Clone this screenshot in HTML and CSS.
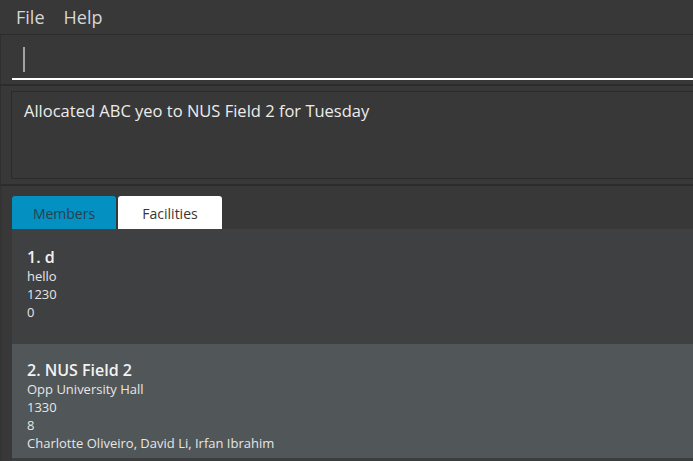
FILE: index.html
```html
<!DOCTYPE html>
<html>
<head>
<meta charset="utf-8">
<link rel="stylesheet" href="styles.css">
</head>
<body>
<div class="app">
  <div class="menubar">
    <span class="menu-item">File</span>
    <span class="menu-item">Help</span>
  </div>
  <div class="command-pane">
    <div class="command-field"><span class="caret"></span></div>
  </div>
  <div class="result-pane">
    <div class="result-box">Allocated ABC yeo to NUS Field 2 for Tuesday</div>
  </div>
  <div class="list-pane">
    <div class="tabs">
      <div class="tab tab-active">Members</div>
      <div class="tab tab-white">Facilities</div>
    </div>
    <div class="list">
      <div class="card card-odd">
        <div class="card-title">1. d</div>
        <div class="card-line">hello</div>
        <div class="card-line">1230</div>
        <div class="card-line">0</div>
      </div>
      <div class="card card-even">
        <div class="card-title">2. NUS Field 2</div>
        <div class="card-line">Opp University Hall</div>
        <div class="card-line">1330</div>
        <div class="card-line">8</div>
        <div class="card-line">Charlotte Oliveiro, David Li, Irfan Ibrahim</div>
      </div>
    </div>
  </div>
</div>
</body>
</html>
```

FILE: styles.css
```css
html, body {
  margin: 0;
  padding: 0;
  background: #383838;
  font-family: "Open Sans", "Noto Sans", sans-serif;
  overflow: hidden;
}
.app {
  width: 693px;
  height: 461px;
  display: flex;
  flex-direction: column;
  background: #383838;
}
.menubar {
  height: 34px;
  flex: none;
  border-bottom: 1px solid #2c2c2c;
  display: flex;
  align-items: center;
  gap: 19px;
  padding-left: 16px;
}
.menu-item {
  color: #d6d6d6;
  font-size: 18px;
  line-height: 22px;
}
.command-pane {
  height: 51px;
  flex: none;
  border-left: 1px solid #2f2f2f;
  border-bottom: 2px solid #2c2c2c;
  padding: 12px 0 0 11px;
  box-sizing: border-box;
}
.command-field {
  height: 31px;
  border-bottom: 2px solid #ffffff;
  padding-left: 11px;
}
.caret {
  display: block;
  width: 2px;
  height: 25px;
  background: #a3a3a3;
}
.result-pane {
  height: 100px;
  flex: none;
  border-left: 1px solid #2f2f2f;
  border-bottom: 2px solid #2c2c2c;
  padding: 5px 0 0 10px;
  box-sizing: border-box;
}
.result-box {
  height: 88px;
  border: 1px solid #2b2b2b;
  border-right: none;
  box-sizing: border-box;
  padding: 8px 12px;
  color: #ececec;
  font-size: 16.5px;
  line-height: 22px;
}
.list-pane {
  flex: 1;
  border-left: 2px solid #333333;
  padding: 10px 0 0 10px;
  display: flex;
  flex-direction: column;
}
.tabs {
  display: flex;
  gap: 2px;
  height: 33px;
  flex: none;
}
.tab {
  width: 104px;
  height: 33px;
  border-radius: 3px 3px 0 0;
  display: flex;
  align-items: center;
  justify-content: center;
  font-size: 14px;
  padding-top: 1px;
  box-sizing: border-box;
}
.tab-active {
  background: #0491c1;
  color: #27404e;
}
.tab-white {
  background: #ffffff;
  color: #3a3530;
}
.list {
  flex: 1;
  display: flex;
  flex-direction: column;
  background: #3c3d3f;
}
.card {
  box-sizing: border-box;
  padding: 0 15px;
  flex: none;
}
.card-odd {
  background: #3f4042;
  height: 115px;
  padding-top: 18px;
}
.card-even {
  background: #515658;
  height: 114px;
  padding-top: 16px;
}
.card-title {
  color: #f2f2f2;
  font-size: 16px;
  font-weight: 600;
  line-height: 20px;
}
.card-line {
  color: #e6e6e6;
  font-size: 13px;
  line-height: 18px;
}
```
